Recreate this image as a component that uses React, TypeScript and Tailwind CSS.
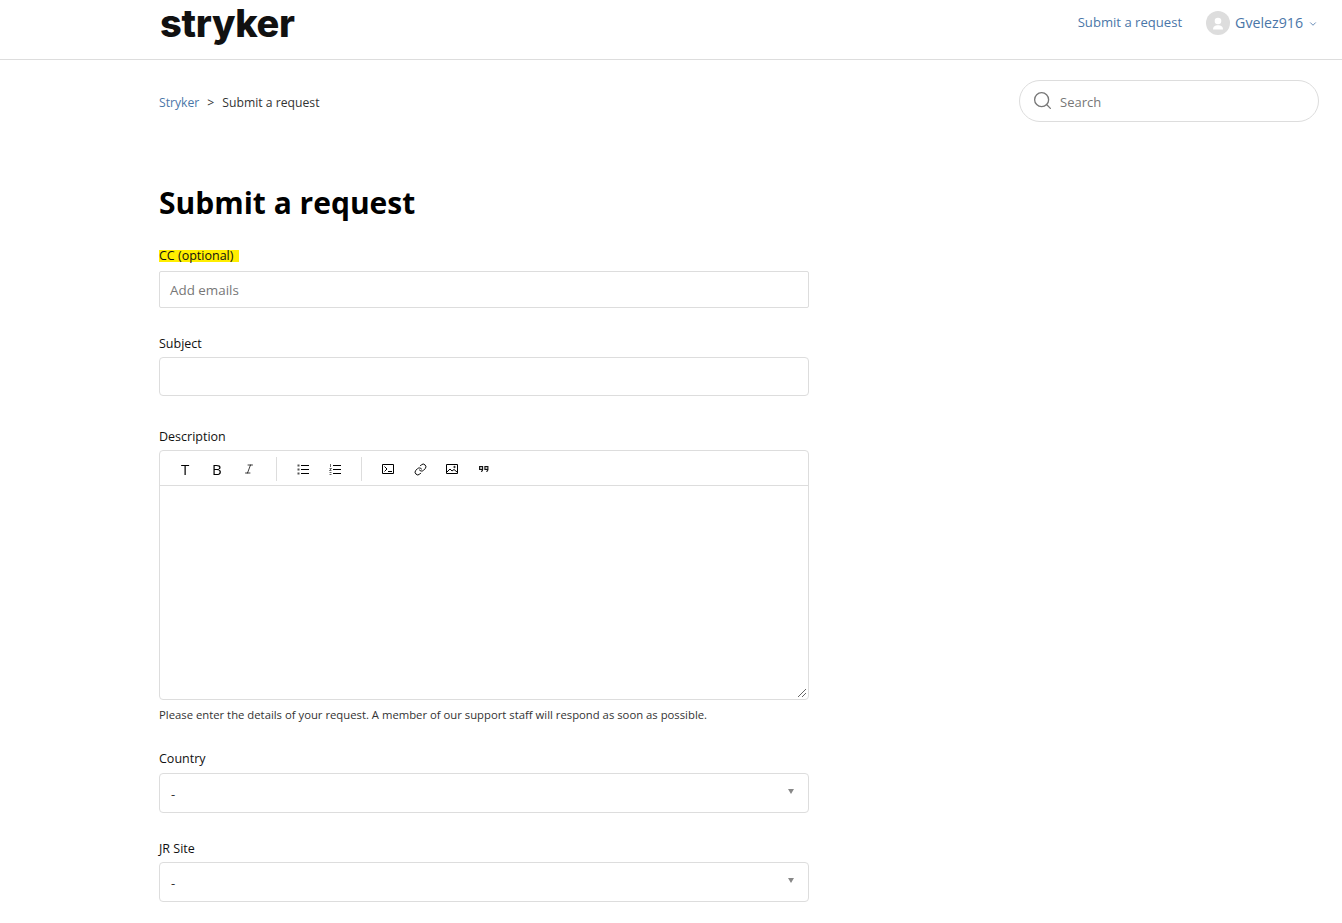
import { ChevronDown, Italic, Link, Search } from 'lucide-react'

function Label({ children }: { children: React.ReactNode }) {
  return <label className="block pt-px text-[12.5px] leading-[18px] text-[#111]">{children}</label>
}

function SelectBox() {
  return (
    <div className="relative flex h-10 w-[650px] items-center rounded border border-[#ddd] px-[11px] pt-[3px] text-[13px] text-[#333]">
      -
      <span className="absolute right-[14px] top-[15px] h-0 w-0 border-x-[3px] border-t-[5px] border-x-transparent border-t-[#888]"></span>
    </div>
  )
}

function Tool({ children }: { children: React.ReactNode }) {
  return <div className="flex h-[24px] w-8 items-center justify-center text-black">{children}</div>
}

export default function App() {
  return (
    <div className="min-h-[923px] bg-white font-['Open_Sans','Noto_Sans',sans-serif] text-[#111]">
      <header className="flex h-[60px] items-center justify-between border-b border-[#ddd] pl-[160px] pr-[24px]">
        <div className="mt-[-14px] font-['Inter',sans-serif] text-[38px] font-extrabold leading-none tracking-[-0.3px] text-[#111]">
          stryker
        </div>
        <nav className="mb-[14px] flex items-center text-[#4a76a8]">
          <a className="text-[13.1px]">Submit a request</a>
          <div className="ml-6 flex h-6 w-6 items-center justify-center rounded-full bg-[#ddd]">
            <svg viewBox="0 0 24 24" className="h-6 w-6" fill="#fff">
              <circle cx="12" cy="10" r="3.3" />
              <path d="M7 18.500c0-3 2.200-4.300 5-4.300s5 1.300 5 4.300z" />
            </svg>
          </div>
          <span className="ml-[5px] text-[14.200px]">Gvelez916</span>
          <ChevronDown size={10} strokeWidth={2} className="ml-[5px] mt-[2px]" />
        </nav>
      </header>

      <div className="ml-[159px] mr-[23px]">
        <div className="mt-5 flex items-center justify-between">
          <div className="mt-[5px] flex items-center text-[12.200px]">
            <a className="text-[#4a76a8]">Stryker</a>
            <span className="mx-[8px] text-[#333]">&gt;</span>
            <span className="text-[#333]">Submit a request</span>
          </div>
          <div className="flex h-[42px] w-[300px] items-center rounded-full border border-[#ddd] pl-[12px] text-[#777]">
            <Search size={21} strokeWidth={1.5} className="mb-[2px]" />
            <span className="ml-[7px] mt-[4px] text-[13px]">Search</span>
          </div>
        </div>

        <h1 className="mt-[59px] text-[30px] font-bold leading-[44px] text-black">Submit a request</h1>

        <div className="mt-[21px]">
          <Label><span className="inline-block bg-[#ffee00] pr-[6px] leading-[12px]">CC (optional)</span></Label>
          <div className="mt-[6px] flex h-[37px] w-[650px] items-center rounded-[2px] border border-[#ddd] px-[10px] pt-[2px] text-[13.400px] text-[#777]">
            Add emails
          </div>
        </div>

        <div className="mt-[26px]">
          <Label>Subject</Label>
          <div className="mt-[4px] h-[39px] w-[650px] rounded border border-[#ddd]"></div>
        </div>

        <div className="mt-[31px]">
          <Label>Description</Label>
          <div className="mt-[4px] w-[650px] rounded border border-[#ddd]">
            <div className="flex h-[35px] items-center border-b border-[#ddd] pl-[9px] pt-[2px]">
              <Tool><span className="text-[15px] font-normal will-change-transform">T</span></Tool>
              <Tool><span className="text-[15px] font-normal will-change-transform">B</span></Tool>
              <Tool><Italic size={12} strokeWidth={1.5} /></Tool>
              <div className="ml-[11px] mr-[10px] h-6 w-px bg-[#ddd]"></div>
              <Tool>
                <svg viewBox="0 0 12 12" className="h-3 w-3" fill="#555" stroke="#000">
                  <path d="M4 2.500H12M4 6.500H12M4 10.500H12" />
                  <path d="M.5 1.500h2v2h-2zM.5 5.500h2v2h-2zM.5 9.500h2v2h-2z" stroke="none" />
                </svg>
              </Tool>
              <Tool>
                <svg viewBox="0 0 12 12" className="h-3 w-3" fill="none" stroke="#000">
                  <path d="M4 2.500H12M4 6.500H12M4 10.500H12" />
                  <path d="M1.500 1v3M.5 5.500h2l-2 2h2M.5 9.500h2M.5 11.500h2" strokeWidth="0.6" />
                </svg>
              </Tool>
              <div className="mx-[10px] h-6 w-px bg-[#ddd]"></div>
              <Tool>
                <svg viewBox="0 0 12 10" className="h-[10px] w-3" fill="none" stroke="#000">
                  <path d="M.5.5h11v9H.5z" />
                  <path d="M2.500 2.500 5 5 2.500 7.500M6 7.500h4" />
                </svg>
              </Tool>
              <Tool><Link size={13} strokeWidth={1.8} /></Tool>
              <Tool>
                <svg viewBox="0 0 12 10" className="h-[10px] w-3" fill="none" stroke="#000">
                  <path d="M.5.5h11v9H.5z" />
                  <path d="M1 8l3-3 2 2 2-1.500L11 8" />
                  <circle cx="8.500" cy="3" r="0.8" fill="#000" strokeWidth="0.5" />
                </svg>
              </Tool>
              <Tool>
                <svg viewBox="0 0 10 6" className="h-[6px] w-[10px]" fill="none" stroke="#111" strokeWidth="1.100">
                  <path d="M.6.6h3v2.800h-3zM3.600 3.400C3.600 4.600 3 5.300 2 5.500M5.900.6h3v2.800h-3zM8.900 3.400C8.900 4.600 8.300 5.300 7.300 5.500" />
                </svg>
              </Tool>
            </div>
            <div className="relative h-[213px]">
              <svg viewBox="0 0 10 10" className="absolute bottom-[1px] right-[1px] h-[10px] w-[10px]" stroke="#666" strokeWidth="1">
                <path d="M1 9 9 1M5 9l4-4" />
              </svg>
            </div>
          </div>
          <p className="mt-[7px] text-[11.300px] leading-4 text-[#333]">
            Please enter the details of your request. A member of our support staff will respond as soon as possible.
          </p>
        </div>

        <div className="mt-[26px]">
          <Label>Country</Label>
          <div className="mt-[5px]"><SelectBox /></div>
        </div>

        <div className="mt-[26px] pb-[21px]">
          <Label>JR Site</Label>
          <div className="mt-[4px]"><SelectBox /></div>
        </div>
      </div>
    </div>
  )
}
